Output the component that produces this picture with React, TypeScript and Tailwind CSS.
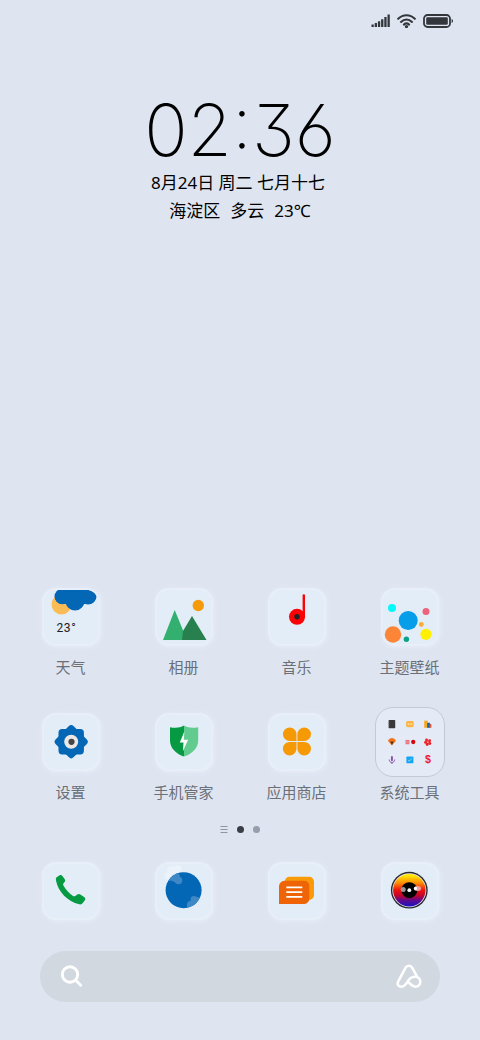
import type { ReactNode } from 'react';

const FONT = "font-['Noto_Sans','Noto_Sans_CJK_SC',sans-serif]";

function StatusBar() {
  return (
    <div className="flex h-[42px] items-center justify-end gap-[7px] pr-[26px] text-[#33373c]">
      <svg width="19" height="14" viewBox="0 0 19 14" fill="currentColor" aria-label="信号">
        <path d="M0.5 10.5h2.3v2.5H0.5zM3.7 9h2.3v4H3.7zM6.9 7.2h2.3V13H6.9zM10.1 5.2h2.3V13h-2.3zM13.3 3h2.3v10h-2.3zM16.5 0.6h2.3V13h-2.3z" />
      </svg>
      <svg width="19" height="14" viewBox="0 0 19 14" fill="none" stroke="currentColor" strokeWidth="2.1" strokeLinecap="round" aria-label="无线网络">
        <path d="M1.2 4.8C6 0 13 0 17.8 4.8M4 7.9c3.3-3.1 7.7-3.1 11 0M6.9 10.6c1.6-1.4 3.6-1.4 5.2 0" />
        <circle cx="9.5" cy="12.6" r="0.6" fill="currentColor" />
      </svg>
      <svg width="31" height="14" viewBox="0 0 31 14" fill="none" aria-label="电池">
        <rect x="1" y="1" width="26" height="12" rx="3.5" stroke="currentColor" strokeWidth="1.8" />
        <rect x="3.2" y="3.2" width="21.6" height="7.6" rx="1.3" fill="currentColor" />
        <path d="M28.6 5c1.8.4 1.8 3.6 0 4z" fill="currentColor" />
      </svg>
    </div>
  );
}

function Clock() {
  return (
    <section className="mt-12 flex flex-col items-center text-black">
      <time className="font-['Inter',sans-serif] text-[72px] leading-[80px] font-extralight [font-feature-settings:'cv03','cv09']">02:36</time>
      <p className="-mt-px pr-1 text-[17px] leading-7">8月24日 周二 七月十七</p>
      <p className="flex gap-2.5 text-[17px] leading-7">
        <span>海淀区</span>
        <span>多云</span>
        <span>23℃</span>
      </p>
    </section>
  );
}

function Weather() {
  return (
    <>
      <svg viewBox="0 0 58 58" className="size-full">
        <circle cx="19.5" cy="16.5" r="10" fill="#fbbb55" />
        <g fill="#0367b6">
          <path d="M20 1h27a7.500 7.500 0 0 1 0 15H20a7.500 7.500 0 0 1 0-15z" />
          <circle cx="20.500" cy="8.800" r="7.500" />
          <circle cx="33" cy="13" r="9.500" />
          <circle cx="46" cy="8.800" r="7.700" />
        </g>
      </svg>
      <span className="absolute bottom-2.5 left-[15px] font-['Roboto',sans-serif] text-xs tracking-wider text-[#1c2024]">23°</span>
    </>
  );
}

function Gallery() {
  return (
    <svg viewBox="0 0 58 58" className="size-full">
      <circle cx="43.3" cy="17.5" r="5.7" fill="#f59a0c" />
      <path d="M8 52 19.7 22 32 52z" fill="#33b070" />
      <path d="M37 28 51.5 52H27l1-9z" fill="#27804d" />
    </svg>
  );
}

function Music() {
  return (
    <svg viewBox="0 0 58 58" className="size-full">
      <circle cx="29" cy="28.8" r="8" fill="#f90306" />
      <path d="M35.8 7.500V29" stroke="#f90306" strokeWidth="2.4" strokeLinecap="round" />
      <circle cx="29" cy="28.8" r="2.7" fill="#222" />
    </svg>
  );
}

function Themes() {
  return (
    <svg viewBox="0 0 58 58" className="size-full">
      <circle cx="11" cy="20" r="4" fill="#06f8fb" />
      <circle cx="45" cy="23.500" r="3.5" fill="#ee6379" />
      <circle cx="27.2" cy="32.500" r="9.5" fill="#069ee9" />
      <circle cx="40.3" cy="36.5" r="2.4" fill="#fcab34" />
      <circle cx="12" cy="46.5" r="8.2" fill="#fd8538" />
      <circle cx="25.4" cy="51.2" r="2.7" fill="#0aa287" />
      <circle cx="45" cy="46.3" r="5.6" fill="#fff002" />
    </svg>
  );
}

function Settings() {
  return (
    <svg viewBox="0 0 58 58" className="size-full">
      <g fill="#0367b6">
        <rect x="16.5" y="16" width="25.4" height="25.4" rx="3.6" />
        <rect x="16.5" y="16" width="25.4" height="25.4" rx="3.6" transform="rotate(45 29.2 28.7)" />
      </g>
      <circle cx="29.2" cy="28.7" r="7" fill="#ebe8e6" />
      <circle cx="29.5" cy="28.8" r="3.1" fill="#454545" />
    </svg>
  );
}

function Security() {
  return (
    <svg viewBox="0 0 58 58" className="size-full">
      <path d="M29 12.6c-4 2.4-9 2.6-14 1.6v13c0 8 6 13.4 14 16.4z" fill="#069b43" />
      <path d="M29 12.6c4 2.4 9 2.6 14.2 1.6v13c0 8-6 13.4-14.2 16.4z" fill="#62cb90" />
      <path d="M29.3 18.5 24.8 29.6h3.7l-.6 8.6 5.2-11.4h-4.2z" fill="#fff" />
    </svg>
  );
}

function AppStore() {
  return (
    <svg viewBox="0 0 58 58" className="size-full" fill="#f59a06">
      <path d="M28.5 28H21.8a6.8 6.8 0 1 1 6.7-6.8z" />
      <path d="M29.4 28h6.7a6.8 6.8 0 1 0-6.7-6.8z" />
      <path d="M28.5 28.9H21.8a6.8 6.8 0 1 0 6.7 6.8z" />
      <path d="M29.4 28.9h6.7a6.8 6.8 0 1 1-6.7 6.8z" />
    </svg>
  );
}

function ToolsFolder() {
  return (
    <svg viewBox="0 0 70 70" className="size-full">
      <rect x="13" y="12.4" width="6.8" height="8.4" rx="0.6" fill="#383838" />
      <path d="M13.300 13.5v6.5" stroke="#888" strokeWidth="0.6" strokeDasharray="1 1" />
      <rect x="31" y="13.4" width="7.8" height="6.4" rx="1.4" fill="#fcb545" />
      <path d="M32.8 16.6h1.6M35.6 16.6h1.6" stroke="#fff0c8" strokeWidth="1.2" />
      <path d="M49.6 13h3.6v7.4h-3.6z" fill="#f9a71d" />
      <path d="M52.7 15.2h2.8v5.2h-2.8z" fill="#0b63b0" />
      <path d="M55.3 16.4h1.7v4h-1.7z" fill="#e8552e" />
      <path d="M12.2 33.8c1.6-4 6.8-4 8.4 0l-4.2 4.7z" fill="#f4761b" />
      <path d="M14.6 34.6h3.6l-1.8 3.6z" fill="#59310f" />
      <rect x="30.4" y="32.9" width="4" height="4.4" fill="#e56a77" />
      <path d="M30.4 34.3h4M30.4 35.9h4" stroke="#f4b8be" strokeWidth="0.5" />
      <circle cx="38.3" cy="35" r="2.2" fill="#d3060d" />
      <g fill="#ee2027">
        <circle cx="52" cy="33" r="1.5" />
        <circle cx="55.2" cy="33.6" r="1.5" />
        <circle cx="55.4" cy="36.6" r="1.5" />
        <circle cx="52.7" cy="37.5" r="1.5" />
        <circle cx="51" cy="35.4" r="1.5" />
        <circle cx="53.4" cy="35.2" r="1.6" />
      </g>
      <circle cx="53.4" cy="35.2" r="0.7" fill="#fff" />
      <g fill="none" stroke="#8653a8" strokeLinecap="round">
        <path d="M16.4 50.4v3.4" strokeWidth="2" />
        <path d="M13.6 53.4c.2 4 5.4 4 5.6 0M16.4 56.2v1" strokeWidth="0.9" />
      </g>
      <rect x="31.3" y="49.8" width="7.2" height="7.2" rx="1" fill="#14a5f3" />
      <path d="m33 53.6 1.3 1.2 2.4-2.8" fill="none" stroke="#a4dcfb" strokeWidth="0.8" />
      <text x="53.4" y="57" textAnchor="middle" fill="#ee2027" className="font-['Liberation_Sans',sans-serif] text-[11px] font-bold">$</text>
    </svg>
  );
}

function Phone() {
  return (
    <svg viewBox="0 0 58 58" className="size-full">
      <path d="M14 18.400c-.3-1.700 0-2.600 1-3.300l2.300-1.600c1.200-.8 2.300-.6 3.100.4l2.200 3.100c.8 1.200.7 2.200-.1 3.100l-1 1.200c-.5.700-.5 1.500-.1 2.300 2.400 4.200 5.600 7.700 9.600 10.300.8.500 1.600.5 2.300 0l2-1.400c1-.7 2.100-.7 3.100 0l4 2.700c1.100.8 1.300 1.800.6 2.900l-2.200 3c-.9 1.200-2.100 1.600-3.600 1.200C25.600 39.500 16.200 29.800 14 18.400z" fill="#069b43" />
    </svg>
  );
}

function Browser() {
  return (
    <svg viewBox="0 0 58 58" className="size-full">
      <defs>
        <clipPath id="globe">
          <circle cx="28.6" cy="28.2" r="18" />
        </clipPath>
      </defs>
      <g fill="#ebf2fa">
        <circle cx="16" cy="8.5" r="4" />
        <circle cx="22.5" cy="7" r="4" />
        <circle cx="13" cy="14" r="3.5" />
      </g>
      <circle cx="28.6" cy="28.2" r="18" fill="#0367b6" />
      <g clipPath="url(#globe)" fill="#3f88c6">
        <circle cx="20" cy="15" r="5" />
        <circle cx="23.5" cy="18.5" r="3.8" />
        <circle cx="14.500" cy="16" r="3" />
        <circle cx="39" cy="37.5" r="3.4" />
        <circle cx="36" cy="43" r="4.2" />
        <circle cx="42" cy="40" r="5" />
      </g>
    </svg>
  );
}

function Messages() {
  return (
    <svg viewBox="0 0 58 58" className="size-full">
      <path d="M21.500 14.700h19.500a5 5 0 0 1 5 5v13.300a5 5 0 0 1-5 5H17V19.200a4.500 4.500 0 0 1 4.500-4.500z" fill="#f99a08" />
      <path d="M16.500 18.800h19.800a5 5 0 0 1 5 5v12.700a5.500 5.500 0 0 1-5.500 5.500H11V24.300a5.500 5.500 0 0 1 5.500-5.500z" fill="#ee6406" />
      <path d="M18.3 25.3h16M18.3 30.1h16M18.3 34.9h16" stroke="#fff" strokeWidth="1.7" />
    </svg>
  );
}

function Camera() {
  return (
    <svg viewBox="0 0 58 58" className="size-full">
      <defs>
        <linearGradient id="lens" x1="0" y1="0" x2="0" y2="1">
          <stop offset="0.05" stopColor="#ffe800" />
          <stop offset="0.28" stopColor="#fb8a08" />
          <stop offset="0.5" stopColor="#f0100c" />
          <stop offset="0.66" stopColor="#c4062c" />
          <stop offset="0.82" stopColor="#5c0a92" />
          <stop offset="1" stopColor="#1a10c0" />
        </linearGradient>
      </defs>
      <circle cx="28.3" cy="28.2" r="18.4" fill="#2a2a2e" />
      <circle cx="28.3" cy="28.2" r="17" fill="#e9e4ea" />
      <circle cx="28.3" cy="28.2" r="16.2" fill="url(#lens)" />
      <circle cx="28.3" cy="28.2" r="8" fill="#000" />
      <circle cx="22.2" cy="27.4" r="2.5" fill="#999" />
      <ellipse cx="36.5" cy="26.6" rx="3.6" ry="2.5" fill="#e8a0a0" />
      <circle cx="34.5" cy="26.4" r="1.6" fill="#fff" />
      <circle cx="28.3" cy="28.2" r="1.9" fill="#fff" />
    </svg>
  );
}

const apps = [
  { name: '天气', icon: <Weather /> },
  { name: '相册', icon: <Gallery /> },
  { name: '音乐', icon: <Music /> },
  { name: '主题壁纸', icon: <Themes /> },
  { name: '设置', icon: <Settings /> },
  { name: '手机管家', icon: <Security /> },
  { name: '应用商店', icon: <AppStore /> },
  { name: '系统工具', icon: <ToolsFolder />, folder: true },
];

const dock = [
  { name: '电话', icon: <Phone /> },
  { name: '浏览器', icon: <Browser /> },
  { name: '短信', icon: <Messages /> },
  { name: '相机', icon: <Camera /> },
];

function Tile({ children }: { children: ReactNode }) {
  return (
    <span className="relative block size-[58px] overflow-hidden rounded-[14px] border-2 border-[#e8eff8] bg-[#e3edf7] shadow-[1px_1px_4px_#e9eff8]">
      <span className="absolute -inset-0.5 block">{children}</span>
    </span>
  );
}

export default function App() {
  return (
    <main className={`flex min-h-screen flex-col bg-[#dee5f1] ${FONT}`}>
      <StatusBar />
      <Clock />

      <div className="grow" />

      {/* Home screen apps */}
      <section className="grid grid-cols-4 gap-y-[34px] px-3.5">
        {apps.map((app) => (
          <button key={app.name} type="button" className="flex flex-col items-center gap-[9px]">
            {app.folder ? (
              <span className="-m-1.5 block size-[70px] rounded-[18px] border border-[#c3cad6] bg-[#e4ebf6]">{app.icon}</span>
            ) : (
              <Tile>{app.icon}</Tile>
            )}
            <span className="text-[15px] leading-6 whitespace-nowrap text-[#6b7077]">{app.name}</span>
          </button>
        ))}
      </section>

      {/* Page indicator */}
      <div className="mt-[17px] flex h-4 items-center justify-center gap-[9px]">
        <svg width="8" height="8" viewBox="0 0 8 8" stroke="#8f96a0" strokeWidth="1.2">
          <path d="M0.5 1.500h7M0.5 4.500h7M0.5 7.500h7" />
        </svg>
        <span className="size-[7px] rounded-full bg-[#3a3e44]" />
        <span className="size-[7px] rounded-full bg-[#969dab]" />
      </div>

      <nav className="mt-[25px] grid grid-cols-4 px-3.5">
        {dock.map((app) => (
          <button key={app.name} type="button" aria-label={app.name} className="flex justify-center">
            <Tile>{app.icon}</Tile>
          </button>
        ))}
      </nav>

      {/* Search */}
      <form className="mx-10 mt-[31px] mb-[38px] flex h-[51px] items-center rounded-full bg-[#d1d8e0] pr-[18px] pl-5 text-white">
        <button type="button" aria-label="搜索">
          <svg width="23" height="23" viewBox="0 0 23 23" fill="none" stroke="currentColor" strokeWidth="2.9" strokeLinecap="round">
            <circle cx="10" cy="9.500" r="7.700" />
            <path d="m15.5 15 5.200 5.200" />
          </svg>
        </button>
        <input type="search" aria-label="搜索内容" className="min-w-0 flex-1 bg-transparent px-3 text-base text-gray-700 outline-none" />
        <button type="button" aria-label="小爱同学">
          <svg width="26" height="26" viewBox="0 0 26 26" fill="none" stroke="currentColor" strokeWidth="2.6" strokeLinecap="round" strokeLinejoin="round">
            <path d="M11.5 18c1.600-3.200 4.200-5.200 7.600-5.200 3 0 5.200 2.200 5.200 5 0 3-2.200 5-5 5-3.200 0-4.600-3-7.400-5-1.900 1.300-3 5-6.400 5-3.300 0-4.600-2.700-3.300-5.300L9.600 3.700c1.500-2.600 5-2.600 6.500 0l5.300 9.400" />
          </svg>
        </button>
      </form>
    </main>
  );
}
